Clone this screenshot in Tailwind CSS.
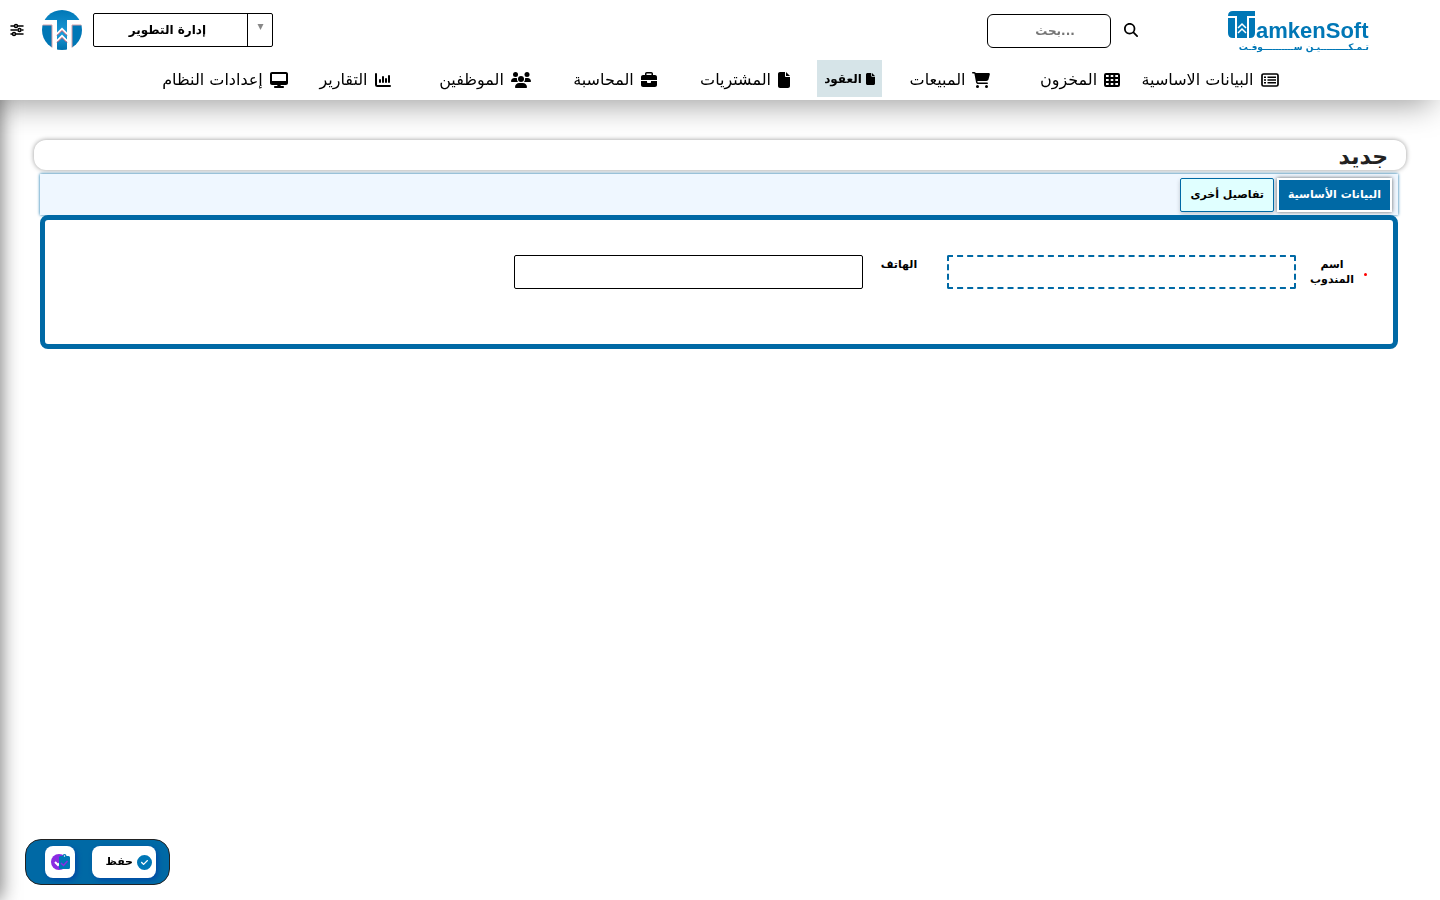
<!DOCTYPE html>
<html lang="ar" dir="rtl">

<head>
  <meta charset="UTF-8">
  <meta name="viewport" content="width=device-width, initial-scale=1.0">
  <title>جديد - TamkenSoft</title>
  <script src="https://cdn.jsdelivr.net/npm/@tailwindcss/browser@4"></script>
</head>

<body class="bg-white min-h-screen text-black font-['DejaVu_Sans',sans-serif]">
  <!-- Header -->
  <header class="relative z-10 bg-white shadow-[-8px_4px_30px_rgba(0,0,0,0.4)]">
    <div class="flex items-center h-[60px] pr-[70px] pl-[10px]">
      <a href="#" aria-label="TamkenSoft" class="mt-1">
        <svg class="w-[142px] h-11" viewBox="0 0 142 44" fill="#0077b6">
          <path d="M5 1H27V6H19V28H9V6H0Q0 1 5 1Z" />
          <path d="M0 8H7V28H5Q0 28 0 23ZM21 8H27V23Q27 28 22 28H21Z" />
          <path d="M10 18L14 14L18 18M10 23L14 19L18 23" fill="none" stroke="#fff" stroke-width="1.500" />
          <text x="28" y="28" font-family="Liberation Sans" font-weight="700" font-size="22" direction="ltr">amkenSoft</text>
          <text x="141" y="40" font-family="DejaVu Sans" font-weight="700" font-size="9" direction="rtl">تـمـكـــــــــيـن ســــــــــوفـت</text>
        </svg>
      </a>
      <div class="flex items-center gap-3 mr-[89px]">
        <button aria-label="بحث" class="flex w-4 justify-center">
          <svg class="size-[14px]" viewBox="0 0 512 512"><path d="M416 208c0 45.900-14.900 88.300-40 122.700L502.600 457.400c12.500 12.500 12.500 32.800 0 45.300s-32.800 12.500-45.300 0L330.700 376c-34.400 25.200-76.800 40-122.700 40C93.100 416 0 322.900 0 208S93.100 0 208 0S416 93.100 416 208zM208 352a144 144 0 1 0 0-288 144 144 0 1 0 0 288z" /></svg>
        </button>
        <input type="search" aria-label="بحث" placeholder="...بحث" class="w-[124px] h-[34px] mt-[2px] border border-black rounded-md text-center text-xs font-bold placeholder:text-[#757575]">
      </div>
      <div class="flex items-center mr-auto gap-[11px]">
        <div class="relative w-[180px] h-[34px] border border-black rounded-xs">
          <select aria-label="الإدارة" dir="ltr" class="appearance-none w-full h-full pr-[31px] text-center text-xs font-bold">
            <option>إدارة التطوير</option>
          </select>
          <span class="absolute right-0 inset-y-0 w-[25px] border-l border-black flex justify-center pt-[10px] pointer-events-none">
            <svg class="w-[7px] h-[6px]" viewBox="0 0 6 6" fill="#888"><path d="M0 0H6L3 6Z" /></svg>
          </span>
        </div>
        <svg class="size-10" viewBox="0 0 40 40">
          <defs>
            <linearGradient id="stem" x1="0" y1="0" x2="0" y2="1">
              <stop offset="0" stop-color="#0077b6" /><stop offset=".6" stop-color="#1a9ad8" /><stop offset="1" stop-color="#0070ac" />
            </linearGradient>
            <clipPath id="disc"><circle cx="20" cy="20" r="20" /></clipPath>
          </defs>
          <g clip-path="url(#disc)">
            <path fill="#0077b6" d="M0 15H10V40H0ZM30 15H40V40H30Z" />
            <path fill="url(#stem)" d="M0 0H40V10H25V40H15V10H0Z" />
            <path fill="none" stroke="#d5a0a8" stroke-width="1" d="M0 15H10V40M40 15H30V40" />
            <path fill="none" stroke="#fff" stroke-width="2" d="M15 24L20 19L25 24M15 31L20 26L25 31" />
            <path fill="none" stroke="#e05a6a" stroke-width="1" d="M15 25.500L20 20.500L25 25.500M15 32.500L20 27.500L25 32.500" />
          </g>
        </svg>
        <button aria-label="خيارات" class="mr-[7px]">
          <svg class="size-[14px]" viewBox="0 0 14 14" fill="none" stroke="#000" stroke-width="1.500" stroke-linecap="round">
            <path d="M1 3H4M8 3H13M1 7H7M12 7H13M1 11H2M6 11H13" />
            <circle cx="6" cy="3" r="1.500" /><circle cx="9.500" cy="7" r="1.500" /><circle cx="4" cy="11" r="1.500" />
          </svg>
        </button>
      </div>
    </div>

    <!-- Navigation -->
    <nav class="flex justify-center h-10 pr-[5px] text-base whitespace-nowrap">
      <a href="#" class="flex w-[130px] justify-center items-center gap-[7px]">
        <svg class="shrink-0 w-[18px] h-4" viewBox="0 0 18 16"><rect x="1" y="2" width="16" height="12" rx="1.500" fill="none" stroke="#000" stroke-width="1.700" /><path d="M3 4.500H5V6H3ZM3 7.300H5V8.800H3ZM3 10.100H5V11.600H3ZM6.500 4.500H15V6H6.500ZM6.500 7.300H15V8.800H6.500ZM6.500 10.100H15V11.600H6.500Z" /></svg>
        البيانات الاساسية
      </a>
      <a href="#" class="flex w-[130px] justify-center items-center gap-[7px]">
        <svg class="size-4" viewBox="0 0 16 16" fill="none" stroke="#000" stroke-width="2"><rect x="1" y="2" width="14" height="12" rx="1" /><path d="M1 6H15M1 10H15M5.700 2V14M10.300 2V14" /></svg>
        المخزون
      </a>
      <a href="#" class="flex w-[130px] justify-center items-center gap-[7px]">
        <svg class="w-[18px] h-4" viewBox="0 0 576 512"><path d="M0 24C0 10.700 10.700 0 24 0H69.500c22 0 41.500 12.800 50.600 32h411c26.300 0 45.500 25 38.600 50.400l-41 152.300c-8.500 31.400-37 53.300-69.500 53.300H170.700l5.400 28.500c2.200 11.300 12.100 19.500 23.600 19.500H488c13.300 0 24 10.700 24 24s-10.700 24-24 24H199.700c-34.600 0-64.300-24.600-70.700-58.500L77.400 54.500c-.7-3.800-4-6.500-7.900-6.500H24C10.700 48 0 37.300 0 24zM128 464a48 48 0 1 1 96 0 48 48 0 1 1 -96 0zm336-48a48 48 0 1 1 0 96 48 48 0 1 1 0-96z" /></svg>
        المبيعات
      </a>
      <a href="#" class="flex w-[65px] h-[37px] mr-[3px] ml-[7px] justify-center items-center gap-1 bg-[#d6e4e8] text-xs font-bold">
        <svg class="w-[9px] h-3" viewBox="0 0 384 512"><path d="M0 64C0 28.700 28.700 0 64 0H224V128c0 17.700 14.300 32 32 32H384V448c0 35.300-28.700 64-64 64H64c-35.300 0-64-28.700-64-64V64zm384 64H256V0L384 128z" /></svg>
        العقود
      </a>
      <a href="#" class="flex w-[130px] justify-center items-center gap-[7px]">
        <svg class="w-3 h-4" viewBox="0 0 384 512"><path d="M0 64C0 28.700 28.700 0 64 0H224V128c0 17.700 14.300 32 32 32H384V448c0 35.300-28.700 64-64 64H64c-35.300 0-64-28.700-64-64V64zm384 64H256V0L384 128z" /></svg>
        المشتريات
      </a>
      <a href="#" class="flex w-[130px] justify-center items-center gap-[7px]">
        <svg class="size-4" viewBox="0 0 512 512"><path d="M184 48H328c4.400 0 8 3.600 8 8V96H176V56c0-4.400 3.600-8 8-8zm-56 8V96H64C28.700 96 0 124.700 0 160v96H192 320 512V160c0-35.300-28.700-64-64-64H384V56c0-30.900-25.100-56-56-56H184c-30.900 0-56 25.100-56 56zM512 288H320v32c0 17.700-14.300 32-32 32H224c-17.700 0-32-14.300-32-32V288H0V416c0 35.300 28.700 64 64 64H448c35.300 0 64-28.700 64-64V288z" /></svg>
        المحاسبة
      </a>
      <a href="#" class="flex w-[130px] justify-center items-center gap-[7px]">
        <svg class="w-5 h-4" viewBox="0 0 20 16"><circle cx="4.500" cy="2.500" r="2.500" /><circle cx="16" cy="2.500" r="2.500" /><circle cx="10" cy="7" r="3" /><path d="M0 9.500C0 7.500 1.500 6 3.300 6H5C6 6 6 6.500 6 7.200C6 8.300 6.300 9.300 7 10H.700C.300 10 0 9.800 0 9.500ZM20 9.500C20 7.500 18.500 6 16.700 6H15C14 6 14 6.500 14 7.200C14 8.300 13.700 9.300 13 10H19.300C19.700 10 20 9.800 20 9.500ZM4 15.200C4 12.800 5.800 11 8.200 11H11.800C14.200 11 16 12.800 16 15.200C16 15.700 15.700 16 15.200 16H4.800C4.300 16 4 15.700 4 15.200Z" /></svg>
        الموظفين
      </a>
      <a href="#" class="flex w-[130px] justify-center items-center gap-[7px]">
        <svg class="size-4" viewBox="0 0 16 16" fill="none" stroke="#000" stroke-width="2" stroke-linecap="round"><path d="M1 2V12.500Q1 14 2.500 14H15M5 8V10M8 5V10M11 7V10M14 4V10" /></svg>
        التقارير
      </a>
      <a href="#" class="flex w-[130px] justify-center items-center gap-[7px]">
        <svg class="w-[18px] h-4" viewBox="0 0 576 512"><path d="M64 0C28.700 0 0 28.700 0 64V352c0 35.300 28.700 64 64 64H240l-10.700 32H160c-17.700 0-32 14.300-32 32s14.300 32 32 32H416c17.700 0 32-14.300 32-32s-14.300-32-32-32H346.700L336 416H512c35.300 0 64-28.700 64-64V64c0-35.300-28.700-64-64-64H64zM512 64V288H64V64H512z" /></svg>
        إعدادات النظام
      </a>
    </nav>
  </header>

  <!-- Edge shadow of the closed side menu -->
  <div class="fixed inset-y-0 -left-5 w-5 shadow-[0_0_20px_rgba(0,0,0,0.6)]"></div>

  <!-- Form -->
  <main class="pt-10 pr-[34px] pl-[34px]">
    <h1 class="h-[30px] pr-[18px] rounded-xl bg-white shadow-[0_0_5px_rgba(0,0,0,0.4)] text-[22px] leading-[34px] font-bold text-[#222]">جديد</h1>
    <div class="mt-1 mr-2 ml-[6px]">
      <div role="tablist" class="flex items-start gap-[3px] h-[41px] pt-1 pr-[6px] bg-[#eff7ff] shadow-[0_0_3px_#0069a5]">
        <button role="tab" aria-selected="true" class="h-[34px] px-[9px] border-2 border-white bg-[#0069a5] text-white text-[11px] font-bold shadow-[0_0_4px_rgba(0,0,0,0.6)]">البيانات الأساسية</button>
        <button role="tab" aria-selected="false" class="h-[34px] px-[9px] border border-[#0069a5] rounded-xs bg-[#e0ffff] text-[11px] font-bold shadow-[0_2px_4px_rgba(0,0,0,0.2)]">تفاصيل أخرى</button>
      </div>
      <form class="relative grid grid-cols-3 h-[134px] pt-[35px] pr-[13px] pl-9 border-5 border-[#0069a5] rounded-lg bg-white text-[11px] font-bold">
        <div class="flex items-start">
          <span class="flex w-5 pt-[18px] pl-1 justify-end"><i class="shrink-0 size-[3px] rounded-full bg-[#ff0000]"></i></span>
          <label for="name" class="w-14 ml-2 pt-[2px] text-center leading-[15px]">اسم المندوب</label>
          <input id="name" type="text" required class="flex-1 min-w-0 h-[34px] px-2 border-2 border-dashed border-[#0069a5] rounded-xs">
        </div>
        <div class="flex items-start">
          <label for="phone" class="w-14 mr-5 ml-2 pt-[2px] text-center leading-[15px]">الهاتف</label>
          <input id="phone" type="text" class="flex-1 min-w-0 h-[34px] px-2 border border-black rounded-xs">
        </div>
      </form>
    </div>
  </main>

  <!-- Action bar -->
  <div class="fixed bottom-[15px] left-[25px] flex items-center gap-[17px] h-[46px] pr-[13px] pl-[19px] border border-[#222] rounded-2xl bg-[#0069a5]">
    <button class="flex items-center gap-1 w-16 h-8 pr-1 rounded-lg bg-white text-[11px] font-bold shadow-[2px_2px_5px_#0047a5]">
      <svg class="size-[15px]" viewBox="0 0 512 512" fill="#0077b6"><path d="M256 512A256 256 0 1 0 256 0a256 256 0 1 0 0 512zM369 209L241 337c-9.400 9.400-24.600 9.400-33.900 0l-64-64c-9.400-9.400-9.400-24.600 0-33.900s24.600-9.400 33.900 0l47 47L335 175c9.400-9.400 24.600-9.400 33.900 0s9.400 24.600 0 33.900z" /></svg>
      حفظ
    </button>
    <button aria-label="حفظ وجديد" class="flex items-center justify-center w-[30px] h-8 rounded-lg bg-white shadow-[2px_2px_5px_#0047a5]">
      <svg class="w-5 h-4" viewBox="0 0 20 16">
        <circle cx="9" cy="8" r="8" fill="#8a2be2" />
        <path d="M5 8L8 11L11 8" fill="none" stroke="#fff" stroke-width="2" />
        <path d="M10.500 2H12.500A2 2 0 0 1 16.500 2H18.500Q20 2 20 3.500V13.500Q20 15 18.500 15H10.500Q9 15 9 13.500V3.500Q9 2 10.500 2Z" fill="#0077b6" />
        <path d="M11 9L13.500 11.500L17.500 7" fill="none" stroke="#8a2be2" stroke-width="1.500" />
        <circle cx="14.500" cy="2" r=".700" fill="#fff" />
      </svg>
    </button>
  </div>
</body>

</html>
